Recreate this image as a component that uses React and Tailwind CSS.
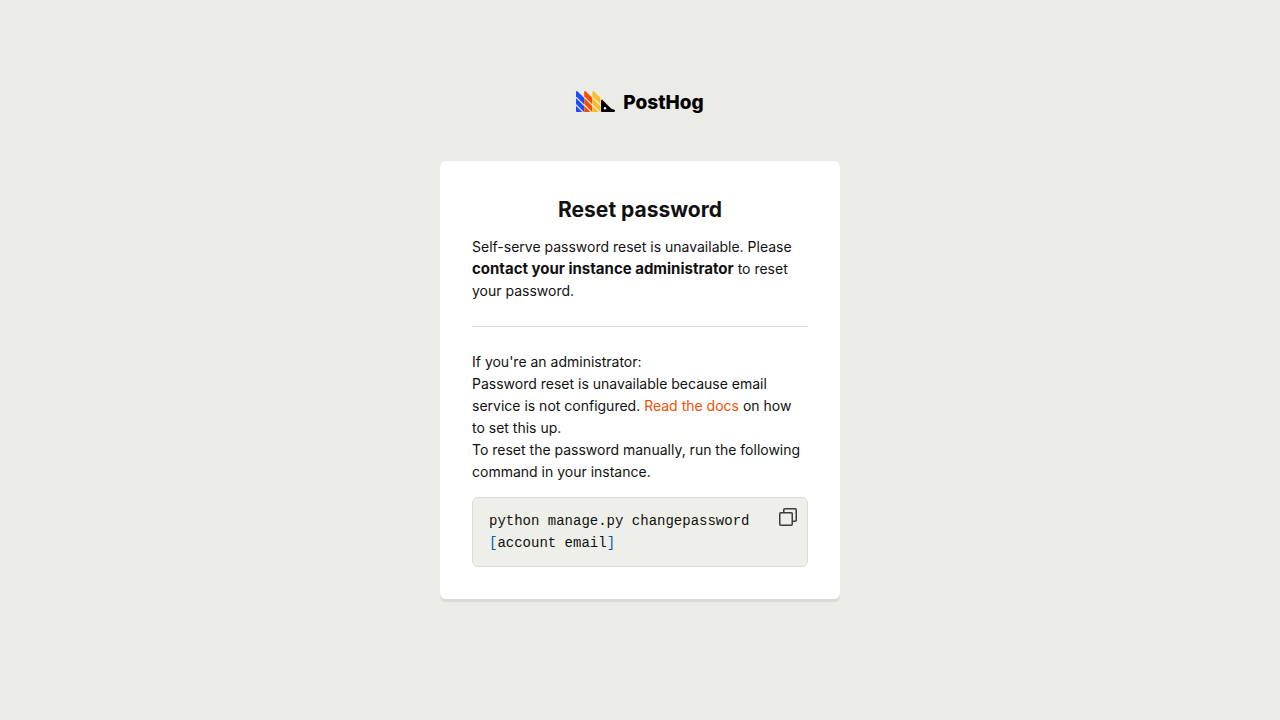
import React from 'react'

function LogoMark() {
  return (
    <svg viewBox="0 0 39 22" className="h-[22px] w-[39px] shrink-0" aria-hidden="true">
      <g fill="#1d4aff">
        <path d="M0 1C0 .1 1-.2 1.600.4L8 6.800v6.400L0 5.300z" />
        <path d="M0 7l8 8v6L0 13z" />
        <path d="M0 14.800L6.200 21H.8a.8.8 0 0 1-.8-.8z" />
      </g>
      <g fill="#f54e00">
        <path d="M8.200 1c0-.9 1-1.200 1.600-.6l6.400 6.400v6.400l-8-7.900z" />
        <path d="M8.200 7l8 8v6l-8-8z" />
        <path d="M8.200 14.800l6.200 6.200H8.200z" />
      </g>
      <g fill="#f9bd2b">
        <path d="M16.400 1c0-.9 1-1.200 1.600-.6l6.400 6.400v6.400l-8-7.900z" />
        <path d="M16.400 7l8 8v6l-8-8z" />
        <path d="M16.400 14.800l6.200 6.200h-6.200z" />
      </g>
      <path
        fill="#000"
        d="M25 9.600c0-.8.9-1.200 1.500-.6l8 8c.8.8 2 1.200 3.300 1.400.6.100 1.100.5 1.100 1.100v.7c0 .5-.4.8-.8.8H25.800a.8.8 0 0 1-.8-.8z"
      />
      <circle cx="29" cy="17.300" r="1.200" fill="#fff" />
    </svg>
  )
}

function CopyIcon() {
  return (
    <svg
      viewBox="0 0 24 24"
      className="h-6 w-6"
      fill="none"
      stroke="#3b3b38"
      strokeWidth="1.5"
      strokeLinejoin="round"
      aria-hidden="true"
    >
      <rect x="3.750" y="7.750" width="12.500" height="12.500" rx="1" />
      <path d="M7.750 7.500V4.750a1 1 0 0 1 1-1h10.500a1 1 0 0 1 1 1v10.500a1 1 0 0 1-1 1H16.500" />
    </svg>
  )
}

export default function App() {
  return (
    <div className="flex min-h-screen flex-col items-center justify-center bg-[#ebece7] px-4 pb-8 font-['Inter',sans-serif] text-sm leading-[22px] text-[#111]">
      <header className="mb-[46px] flex items-center gap-2">
        <LogoMark />
        <span className="text-[19px] leading-[25px] font-extrabold text-black">PostHog</span>
      </header>
      <main className="w-full max-w-[400px] rounded-md bg-white p-8 shadow-[0_3px_0_#dadbd2]">
        <h1 className="mb-[9px] text-center text-[21px] leading-[34px] font-bold">Reset password</h1>
        <p>
          Self-serve password reset is unavailable. Please{' '}
          <b className="text-[15px]">contact your instance administrator</b> to reset your password.
        </p>
        <hr className="my-6 border-[#dadbd2]" />
        <p>If you&apos;re an administrator:</p>
        <p>
          Password reset is unavailable because email service is not configured.{' '}
          <a href="#docs" className="text-[#f54e00]">
            Read the docs
          </a>{' '}
          on how to set this up.
        </p>
        <p>To reset the password manually, run the following command in your instance.</p>
        <div className="mt-3.5 flex items-start rounded-md border border-[#dadbd2] bg-[#eeefe9]">
          <code className="min-w-0 flex-1 py-3 pl-4 font-['Liberation_Mono',monospace] text-sm leading-[22px]">
            python manage.py changepassword <span className="text-[#005cc5]">[</span>account email
            <span className="text-[#005cc5]">]</span>
          </code>
          <button type="button" aria-label="Copy command" className="m-[7px] shrink-0">
            <CopyIcon />
          </button>
        </div>
      </main>
    </div>
  )
}
